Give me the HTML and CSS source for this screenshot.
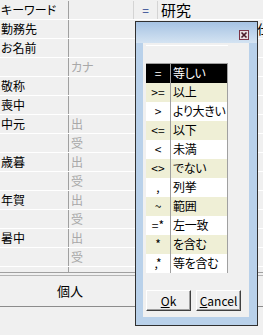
FILE: index.html
```html
<!DOCTYPE html>
<html lang="ja">
<head>
  <meta charset="UTF-8">
  <title>検索条件</title>
  <link rel="stylesheet" href="styles.css">
</head>
<body>
  <div class="screen">
    <div class="sheet">
      <div class="rows">
        <div class="row row-key">
          <span class="label">キーワード</span>
          <span class="value"></span>
          <span class="op">=</span>
          <span class="keyword">研究</span>
          <span class="extra"></span>
        </div>
        <div class="row"><span class="label">勤務先</span><span class="value"></span><span class="op"></span><span class="keyword"></span><span class="extra">仕</span></div>
        <div class="row"><span class="label">お名前</span><span class="value"></span></div>
        <div class="row"><span class="label"></span><span class="value">カナ</span></div>
        <div class="row"><span class="label">敬称</span><span class="value"></span></div>
        <div class="row"><span class="label">喪中</span><span class="value"></span></div>
        <div class="row"><span class="label">中元</span><span class="value">出</span></div>
        <div class="row"><span class="label"></span><span class="value">受</span></div>
        <div class="row"><span class="label">歳暮</span><span class="value">出</span></div>
        <div class="row"><span class="label"></span><span class="value">受</span></div>
        <div class="row"><span class="label">年賀</span><span class="value">出</span></div>
        <div class="row"><span class="label"></span><span class="value">受</span></div>
        <div class="row"><span class="label">暑中</span><span class="value">出</span></div>
        <div class="row"><span class="label"></span><span class="value">受</span></div>
        <div class="row row-cut"><span class="label">備考</span><span class="value"></span></div>
      </div>
      <div class="tabs">
        <div class="tab">個人</div>
      </div>
    </div>

    <!-- operator picker window -->
    <div class="picker">
      <div class="picker-title">
        <span class="close">
          <svg width="10" height="10" viewBox="0 0 10 10">
            <rect x="0.5" y="0.5" width="9" height="9" fill="#e9dde0" stroke="#7b3346"/>
            <path d="M2.5 2.5 L7.5 7.5 M7.5 2.5 L2.5 7.5" stroke="#4a1a28" stroke-width="1.6"/>
          </svg>
        </span>
      </div>
      <div class="picker-body">
        <div class="ops">
          <div class="cell head"></div><div class="cell head"></div>
          <div class="cell sym sel">=</div><div class="cell name sel">等しい</div>
          <div class="cell sym alt">&gt;=</div><div class="cell name alt">以上</div>
          <div class="cell sym">&gt;</div><div class="cell name">より大きい</div>
          <div class="cell sym alt">&lt;=</div><div class="cell name alt">以下</div>
          <div class="cell sym">&lt;</div><div class="cell name">未満</div>
          <div class="cell sym alt">&lt;&gt;</div><div class="cell name alt">でない</div>
          <div class="cell sym">,</div><div class="cell name">列挙</div>
          <div class="cell sym alt">~</div><div class="cell name alt">範囲</div>
          <div class="cell sym">=*</div><div class="cell name">左一致</div>
          <div class="cell sym alt">*</div><div class="cell name alt">を含む</div>
          <div class="cell sym">,*</div><div class="cell name">等を含む</div>
        </div>
        <div class="btns">
          <button class="btn"><u>O</u>k</button>
          <button class="btn"><u>C</u>ancel</button>
        </div>
      </div>
    </div>
  </div>
</body>
</html>
```

FILE: styles.css
```css
* {
  margin: 0;
  padding: 0;
  box-sizing: border-box;
}

body {
  background: #f0f0f0;
  font-family: "Noto Sans CJK JP", "DejaVu Sans", sans-serif;
  font-size: 12px;
  font-feature-settings: "palt";
  color: #000;
}

.screen {
  position: relative;
  width: 263px;
  height: 335px;
  overflow: hidden;
}

/* Background form */
.rows {
  height: 273px;
  padding-top: 1px;
  overflow: hidden;
  border-bottom: 1px solid #a0a0a0;
}

.row {
  display: grid;
  grid-template-columns: 69px 64px 25px 98px 1fr;
  height: 19px;
  border-bottom: 1px solid #fff;
  line-height: 18px;
}

.row-cut {
  line-height: 26px;
}

.label {
  padding-left: 1px;
  border-right: 1px solid #a0a0a0;
  white-space: nowrap;
}

.value {
  padding-left: 2px;
  color: #a8a8a8;
}

.op {
  text-align: center;
  color: #1f3f8f;
}

.row-key .op {
  border-left: 1px solid #d4d4d4;
  border-right: 1px solid #d4d4d4;
}

.keyword {
  padding-left: 3px;
  font-size: 15px;
}

.extra {
  font-size: 13px;
  padding-left: 1px;
  white-space: nowrap;
}

.tabs {
  margin-top: 2px;
  height: 32px;
  border-top: 1px solid #b4b4b4;
  border-bottom: 1px solid #8c8c8c;
}

.tab {
  width: 140px;
  height: 30px;
  line-height: 30px;
  text-align: center;
  font-size: 13px;
}

/* Picker window */
.picker {
  position: absolute;
  left: 135px;
  top: 21px;
  width: 123px;
  height: 305px;
  border: 1px solid #303030;
  background: #b9d1ea;
  display: flex;
  flex-direction: column;
}

.picker-title {
  height: 21px;
  background: linear-gradient(#a6c3e3, #d4e3f2);
  display: flex;
  justify-content: flex-end;
  padding: 8px 8px 0 0;
}

.close {
  display: block;
  width: 10px;
  height: 10px;
}

.close svg {
  display: block;
}

.picker-body {
  flex: 1;
  margin: 0 8px 8px 7px;
  background: #f0f0f0;
  padding: 2px 0 0 3px;
}

.ops {
  display: grid;
  grid-template-columns: 25px 57px;
  width: 82px;
}

.cell {
  height: 19px;
  line-height: 18px;
  background: #fff;
  white-space: nowrap;
  overflow: hidden;
}

.sym {
  text-align: center;
  border-right: 1px solid #a0a0a0;
}

.name {
  padding-left: 2px;
  border-right: 1px solid #a0a0a0;
  letter-spacing: -0.3px;
}

.head {
  background: #f0f0f0;
  border-top: 1px solid #fff;
  border-bottom: 1px solid #a0a0a0;
}

.alt {
  background: #efefd6;
}

.sel {
  background: #000;
  color: #fff;
}

.btns {
  display: flex;
  gap: 5px;
  margin-top: 17px;
}

.btn {
  width: 45px;
  height: 21px;
  font-family: "Noto Sans CJK JP", "DejaVu Sans", sans-serif;
  font-size: 12px;
  background: #f0f0f0;
  border: 1px solid;
  border-color: #fff #404040 #404040 #fff;
  box-shadow: inset -1px -1px 0 #a0a0a0;
  color: #000;
}
```
